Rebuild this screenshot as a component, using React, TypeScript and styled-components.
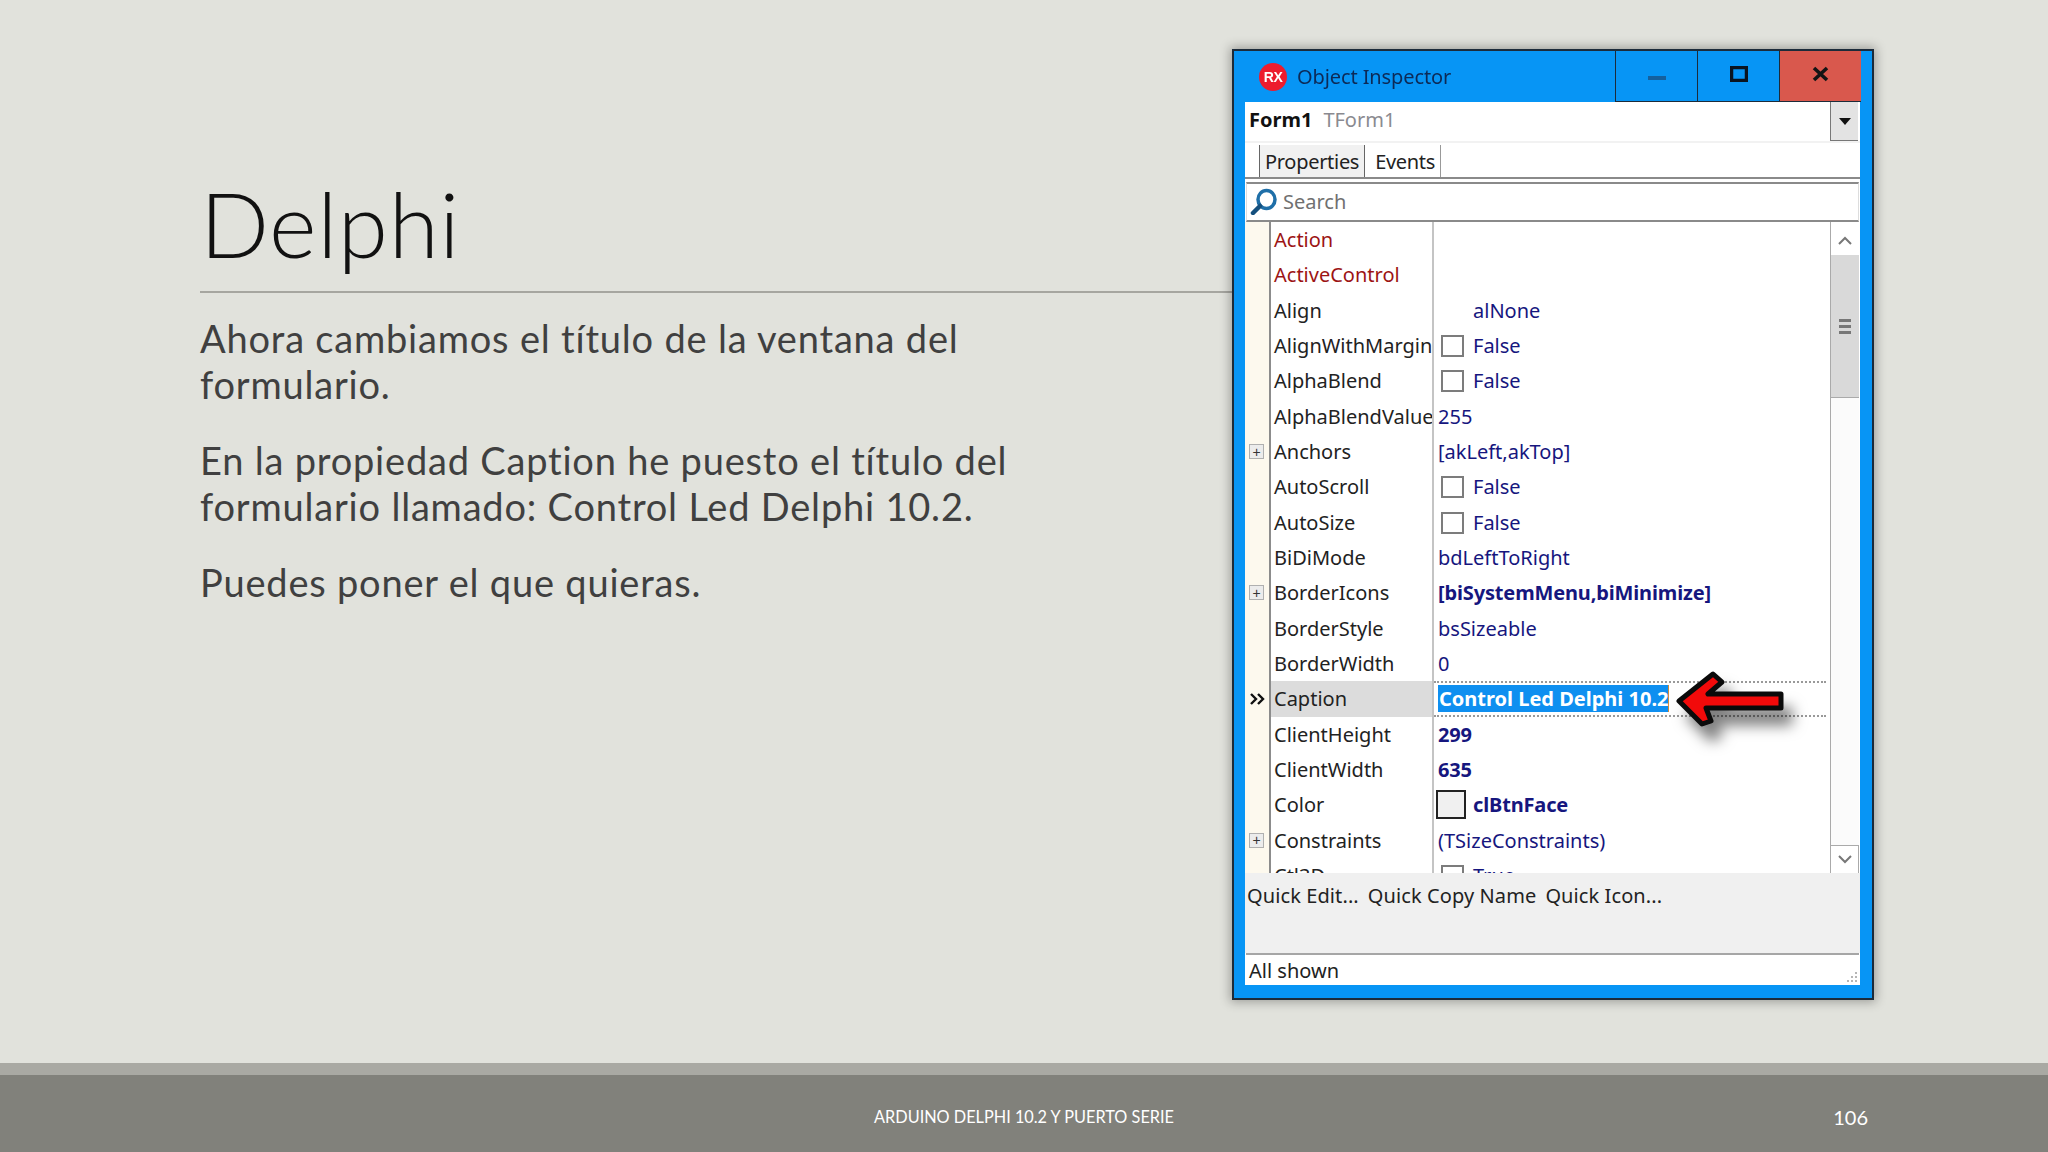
import React from 'react';
import styled, { createGlobalStyle } from 'styled-components';

const GlobalStyle = createGlobalStyle`
  html, body {
    margin: 0;
    padding: 0;
    background: #e1e2dc;
  }
`;

const Slide = styled.div`
  width: 2048px;
  height: 1152px;
  display: flex;
  flex-direction: column;
  overflow: hidden;
  background: #e1e2dc;
  font-family: "Lato", "Liberation Sans", sans-serif;
  font-variant-ligatures: none;
`;

const Main = styled.main`
  flex: 1;
  display: flex;
  padding-left: 200px;
`;

const TextColumn = styled.section`
  width: 1032px;
`;

const Title = styled.h1`
  margin: 0;
  height: 293px;
  box-sizing: border-box;
  padding: 168px 0 0 0;
  border-bottom: 2px solid #a6a6a0;
  font-size: 91px;
  font-weight: 300;
  line-height: 110px;
  letter-spacing: 0.6px;
  color: #111;
`;

const Body = styled.div`
  padding-top: 22px;
  width: 830px;
`;

const Para = styled.p`
  margin: 0 0 30px;
  font-size: 38px;
  line-height: 46px;
  letter-spacing: 0.8px;
  color: #404040;
`;

const Band = styled.div`
  height: 12px;
  background: #a9a9a3;
`;

const FooterBar = styled.footer`
  height: 77px;
  box-sizing: border-box;
  padding: 6px 180px 0;
  display: grid;
  grid-template-columns: 1fr auto 1fr;
  align-items: center;
  background: #81817b;
  color: #fff;
`;

const FooterText = styled.span`
  grid-column: 2;
  font-size: 16.3px;
`;

const PageNumber = styled.span`
  justify-self: end;
  font-size: 20px;
`;

const Win = styled.div`
  width: 642px;
  height: 951px;
  margin-top: 49px;
  box-sizing: border-box;
  display: flex;
  flex-direction: column;
  background: #0795f5;
  border: 2px solid #1c2b3a;
  box-shadow: 0 0 10px 2px rgba(0, 0, 0, 0.3);
  font-family: "Noto Sans", "Liberation Sans", sans-serif;
  font-size: 20px;
  color: #222;
  filter: blur(0.35px);
`;

const TitleBar = styled.header`
  height: 51px;
  padding: 0 11px 0 25px;
  display: flex;
  align-items: center;
`;

const AppLogo = styled.span`
  width: 28px;
  height: 28px;
  margin-right: 10px;
  border-radius: 50%;
  display: flex;
  align-items: center;
  justify-content: center;
  background: #ed1c2e;
  color: #fff;
  font: 700 14px "Liberation Sans", sans-serif;
  letter-spacing: -0.5px;
`;

const WinTitle = styled.span`
  flex: 1;
  color: #0d2a56;
  letter-spacing: -0.1px;
`;

const WinButton = styled.button<{ $close?: boolean }>`
  width: 82px;
  height: 100%;
  padding: 0 0 5px;
  display: flex;
  align-items: center;
  justify-content: center;
  background: ${(p) => (p.$close ? '#d9584d' : 'transparent')};
  border: 0;
  border-left: 1.5px solid #1c2b3a;
  border-bottom: 1.5px solid #1c2b3a;
`;

const Panel = styled.div`
  flex: 1;
  margin: 0 12px 13px 11px;
  display: flex;
  flex-direction: column;
  background: #fff;
`;

const FormRow = styled.div`
  height: 41px;
  padding-left: 4px;
  display: flex;
  align-items: center;
  gap: 11px;
  box-sizing: border-box;
  border-bottom: 2px solid #f2f2f2;
`;

const FormName = styled.b`
  margin-bottom: 5px;
  color: #111;
`;

const FormType = styled.span`
  flex: 1;
  margin-bottom: 5px;
  color: #8a8a90;
`;

const DropButton = styled.span`
  width: 28px;
  height: 39px;
  margin-right: 2px;
  box-sizing: border-box;
  display: flex;
  align-items: center;
  justify-content: center;
  background: #e3e3e3;
  border-left: 1.5px solid #777;
  border-bottom: 1.5px solid #777;

  &::after {
    content: "";
    border: 6px solid transparent;
    border-top: 7px solid #111;
    border-bottom: 0;
  }
`;

const TabBar = styled.div`
  height: 36px;
  box-sizing: border-box;
  padding: 2px 0 0 14px;
  display: flex;
  border-bottom: 2px solid #8a8a8a;
  letter-spacing: -0.3px;
`;

const Tab = styled.span<{ $active?: boolean }>`
  padding: 0 5px 0 ${(p) => (p.$active ? '5px' : '10px')};
  display: flex;
  align-items: center;
  background: ${(p) => (p.$active ? '#f1f1f1' : 'transparent')};
  border-left: ${(p) => (p.$active ? '1.5px solid #666' : '0')};
  border-right: 1.5px solid ${(p) => (p.$active ? '#666' : '#999')};
`;

const SearchBox = styled.div`
  height: 40px;
  margin: 3px 1px 0;
  box-sizing: border-box;
  padding: 0 0 2px 3px;
  display: flex;
  align-items: center;
  gap: 5px;
  border-top: 2px solid #8a8a8a;
  border-bottom: 2px solid #8a8a8a;
  border-left: 1px solid #ddd;
  border-right: 1px solid #ddd;
  color: #707070;
`;

const GridArea = styled.div`
  height: 651px;
  display: flex;
`;

const Rows = styled.div`
  flex: 1;
  min-width: 0;
  overflow: hidden;
  display: grid;
  grid-auto-rows: 35.33px;
  align-content: start;
`;

const Row = styled.div`
  display: grid;
  grid-template-columns: 26px 163px 1fr;
`;

const Gutter = styled.div`
  display: flex;
  align-items: center;
  padding-left: 4px;
  background: #fdf9ee;
  border-right: 2px solid #8c8c8c;
`;

const ExpandBox = styled.span`
  width: 15px;
  height: 15px;
  box-sizing: border-box;
  display: flex;
  align-items: center;
  justify-content: center;
  background: #ececec;
  border: 1.5px solid #b0b0b0;
  font: 14px/1 "Liberation Sans", sans-serif;
  color: #333;
`;

const Name = styled.div<{ $red?: boolean; $selected?: boolean }>`
  padding-left: 3px;
  overflow: hidden;
  white-space: nowrap;
  display: flex;
  align-items: center;
  color: ${(p) => (p.$red ? '#9c1414' : '#222')};
  background: ${(p) => (p.$selected ? '#dcdcdc' : 'transparent')};
  border-right: 2px solid #c4c4c4;
`;

const Value = styled.div<{ $bold?: boolean; $wide?: boolean; $selected?: boolean }>`
  position: relative;
  padding-left: ${(p) => (p.$wide ? '39px' : '4px')};
  display: flex;
  align-items: center;
  white-space: nowrap;
  color: #16167e;
  font-weight: ${(p) => (p.$bold ? 700 : 400)};
  letter-spacing: ${(p) => (p.$bold ? '-0.15px' : '0')};
  ${(p) =>
    p.$selected &&
    `
    margin-right: 4px;
    border-top: 2px dotted #999;
    border-bottom: 2px dotted #999;
    box-sizing: border-box;
  `}
`;

const Selected = styled.span`
  height: 27px;
  padding: 0 0 0 1px;
  display: flex;
  align-items: center;
  background: #0e8ff0;
  color: #fff;
  font-weight: 700;
  border-right: 1.5px solid #d08a3a;
`;

const CheckBox = styled.span`
  position: absolute;
  left: 7px;
  top: 7px;
  width: 23px;
  height: 22px;
  box-sizing: border-box;
  background: #fff;
  border: 2px solid #7c7c7c;
`;

const Swatch = styled.span`
  position: absolute;
  left: 2px;
  top: 3px;
  width: 30px;
  height: 29px;
  box-sizing: border-box;
  background: #f0f0f0;
  border: 2px solid #222;
`;

const ArrowMark = styled.svg`
  position: absolute;
  left: 234px;
  top: -14px;
  width: 120px;
  height: 70px;
  overflow: visible;
  filter: drop-shadow(9px 15px 7px rgba(0, 0, 0, 0.5));
`;

const ScrollBar = styled.div`
  width: 29px;
  margin-right: 1px;
  box-sizing: border-box;
  display: flex;
  flex-direction: column;
  border-left: 1.5px solid #aaa;
  background: #fbfbfb;
`;

const ScrollButton = styled.div<{ $down?: boolean }>`
  height: ${(p) => (p.$down ? '28px' : '33px')};
  margin-top: ${(p) => (p.$down ? 'auto' : '0')};
  padding-top: ${(p) => (p.$down ? '0' : '3px')};
  display: flex;
  align-items: center;
  justify-content: center;
  background: #fff;
  box-sizing: border-box;
  border-top: ${(p) => (p.$down ? '1.5px solid #aaa' : '0')};
  border-right: ${(p) => (p.$down ? '1px solid #aaa' : '0')};
`;

const Thumb = styled.div`
  height: 143px;
  display: flex;
  flex-direction: column;
  align-items: center;
  justify-content: center;
  gap: 3px;
  background: #d9d9d9;
  border-bottom: 1px solid #aaa;
  box-sizing: border-box;
`;

const GripLine = styled.span`
  width: 12px;
  height: 3px;
  background: #777;
`;

const QuickBar = styled.div`
  height: 80px;
  padding: 9px 0 0 2px;
  box-sizing: border-box;
  display: flex;
  gap: 9px;
  background: #f0f0f0;
  color: #222;
  letter-spacing: 0.1px;
`;

const StatusBar = styled.div`
  flex: 1;
  position: relative;
  margin: 0 1px;
  padding-left: 3px;
  display: flex;
  align-items: center;
  border-top: 2px solid #a6a6a6;
  color: #222;
`;

const ResizeGrip = styled.svg`
  position: absolute;
  right: 1px;
  bottom: 1px;
  width: 14px;
  height: 14px;
`;

type Prop = {
  name: string;
  value?: string;
  red?: boolean;
  bold?: boolean;
  check?: boolean;
  checked?: boolean;
  wide?: boolean;
  expand?: boolean;
  swatch?: boolean;
  selected?: boolean;
};

const props: Prop[] = [
  { name: 'Action', red: true },
  { name: 'ActiveControl', red: true },
  { name: 'Align', value: 'alNone', wide: true },
  { name: 'AlignWithMargins', value: 'False', check: true },
  { name: 'AlphaBlend', value: 'False', check: true },
  { name: 'AlphaBlendValue', value: '255' },
  { name: 'Anchors', value: '[akLeft,akTop]', expand: true },
  { name: 'AutoScroll', value: 'False', check: true },
  { name: 'AutoSize', value: 'False', check: true },
  { name: 'BiDiMode', value: 'bdLeftToRight' },
  { name: 'BorderIcons', value: '[biSystemMenu,biMinimize]', bold: true, expand: true },
  { name: 'BorderStyle', value: 'bsSizeable' },
  { name: 'BorderWidth', value: '0' },
  { name: 'Caption', value: 'Control Led Delphi 10.2', selected: true },
  { name: 'ClientHeight', value: '299', bold: true },
  { name: 'ClientWidth', value: '635', bold: true },
  { name: 'Color', value: 'clBtnFace', bold: true, swatch: true },
  { name: 'Constraints', value: '(TSizeConstraints)', expand: true },
  { name: 'Ctl3D', value: 'True', check: true, checked: true },
];

const SearchIcon = () => (
  <svg width="28" height="27" viewBox="0 0 28 27">
    <ellipse cx="16.5" cy="11.5" rx="8.5" ry="9" fill="none" stroke="#1f6fa8" strokeWidth="3.5" />
    <path d="M10 18 L3 25" stroke="#14507e" strokeWidth="4.5" strokeLinecap="round" />
  </svg>
);

const Arrow = () => (
  <ArrowMark viewBox="0 0 120 70">
    <path
      d="M11 32 L45 5 L54 13 L40 25 L113 25 L113 39 L38 39 L43 52 L34 55 Z"
      fill="#f20a0a"
      stroke="#0a0a0a"
      strokeWidth="5"
      strokeLinejoin="round"
    />
  </ArrowMark>
);

const SelectedMark = () => (
  <svg width="17" height="14" viewBox="0 0 17 14">
    <path d="M2 2 L7 7 L2 12 M9 2 L14 7 L9 12" fill="none" stroke="#111" strokeWidth="2.4" />
  </svg>
);

const PropRow = ({ p }: { p: Prop }) => (
  <Row>
    <Gutter>
      {p.expand && <ExpandBox>+</ExpandBox>}
      {p.selected && <SelectedMark />}
    </Gutter>
    <Name $red={p.red} $selected={p.selected}>
      {p.name}
    </Name>
    <Value
      $bold={p.bold}
      $wide={p.wide || p.check || p.swatch}
      $selected={p.selected}
    >
      {p.check && <CheckBox />}
      {p.swatch && <Swatch />}
      {p.selected ? (
        <>
          <Selected>{p.value}</Selected>
          <Arrow />
        </>
      ) : (
        p.value
      )}
    </Value>
  </Row>
);

const App = () => (
  <>
    <GlobalStyle />
    <Slide>
      <Main>
        <TextColumn>
          <Title>Delphi</Title>
          <Body>
            <Para>Ahora cambiamos el título de la ventana del formulario.</Para>
            <Para>
              En la propiedad Caption he puesto el título del formulario llamado: Control Led Delphi
              10.2.
            </Para>
            <Para>Puedes poner el que quieras.</Para>
          </Body>
        </TextColumn>
        <Win>
          <TitleBar>
            <AppLogo>RX</AppLogo>
            <WinTitle>Object Inspector</WinTitle>
            <WinButton aria-label="Minimize">
              <svg width="18" height="12" viewBox="0 0 18 12">
                <rect x="0" y="8" width="18" height="4" fill="#14609e" />
              </svg>
            </WinButton>
            <WinButton aria-label="Maximize">
              <svg width="18" height="16" viewBox="0 0 18 16">
                <rect x="1.5" y="1.5" width="15" height="13" fill="none" stroke="#0a1420" strokeWidth="3.5" />
              </svg>
            </WinButton>
            <WinButton $close aria-label="Close">
              <svg width="17" height="16" viewBox="0 0 17 16">
                <path d="M2 2 L15 14 M15 2 L2 14" stroke="#141414" strokeWidth="3.6" />
              </svg>
            </WinButton>
          </TitleBar>
          <Panel>
            <FormRow>
              <FormName>Form1</FormName>
              <FormType>TForm1</FormType>
              <DropButton />
            </FormRow>
            <TabBar>
              <Tab $active>Properties</Tab>
              <Tab>Events</Tab>
            </TabBar>
            <SearchBox>
              <SearchIcon />
              Search
            </SearchBox>
            <GridArea>
              <Rows>
                {props.map((p) => (
                  <PropRow key={p.name} p={p} />
                ))}
              </Rows>
              <ScrollBar>
                <ScrollButton>
                  <svg width="14" height="9" viewBox="0 0 14 9">
                    <path d="M1 8 L7 2 L13 8" fill="none" stroke="#777" strokeWidth="2" />
                  </svg>
                </ScrollButton>
                <Thumb>
                  <GripLine />
                  <GripLine />
                  <GripLine />
                </Thumb>
                <ScrollButton $down>
                  <svg width="14" height="9" viewBox="0 0 14 9">
                    <path d="M1 1 L7 7 L13 1" fill="none" stroke="#777" strokeWidth="2" />
                  </svg>
                </ScrollButton>
              </ScrollBar>
            </GridArea>
            <QuickBar>
              <span>Quick Edit...</span>
              <span>Quick Copy Name</span>
              <span>Quick Icon...</span>
            </QuickBar>
            <StatusBar>
              All shown
              <ResizeGrip viewBox="0 0 14 14">
                <path d="M11 2h2v2h-2zM7 6h2v2H7zM11 6h2v2h-2zM3 10h2v2H3zM7 10h2v2H7zM11 10h2v2h-2z" fill="#b5b5b5" />
              </ResizeGrip>
            </StatusBar>
          </Panel>
        </Win>
      </Main>
      <Band />
      <FooterBar>
        <FooterText>ARDUINO DELPHI 10.2 Y PUERTO SERIE</FooterText>
        <PageNumber>106</PageNumber>
      </FooterBar>
    </Slide>
  </>
);

export default App;
